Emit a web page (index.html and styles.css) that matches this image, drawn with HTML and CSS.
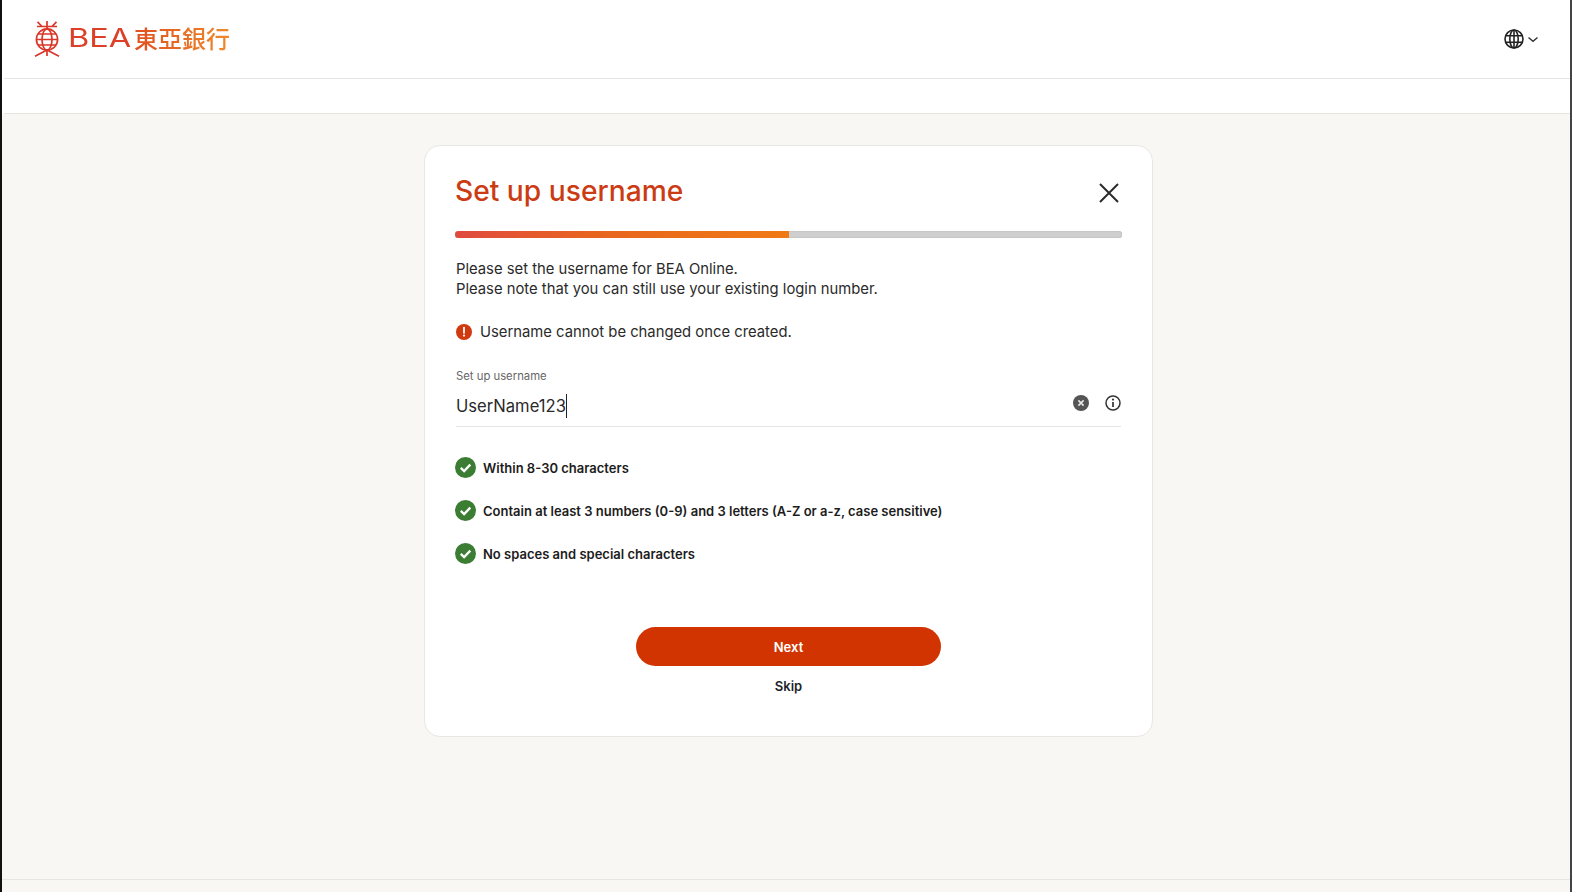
FILE: index.html
```html
<!DOCTYPE html>
<html lang="en">
<head>
<meta charset="utf-8">
<title>Set up username</title>
<link rel="stylesheet" href="styles.css">
</head>
<body>
<div class="frame">
  <header class="topbar">
    <div class="logo">
      <svg class="logo-mark" width="26" height="36" viewBox="0 0 26 36" fill="none" stroke="#d9372a" stroke-width="1.7">
        <circle cx="13" cy="18.5" r="10.6"/>
        <ellipse cx="13" cy="18.5" rx="5" ry="10.6"/>
        <path d="M2.4 18.5h21.2M4.2 13h17.6M4.2 24h17.6M13 0v8M13 29v6"/>
        <path d="M3 5.5h20M3.5 .8l4.5 4.7M22.5 .8L18 5.5M1 35.2l12-6.2 12 6.2"/>
      </svg>
      <span class="logo-text"><span class="logo-en">BEA</span><span class="logo-zh">東亞銀行</span></span>
    </div>
    <div class="lang">
      <svg width="20" height="20" viewBox="0 0 20 20" fill="none" stroke="#222" stroke-width="1.6">
        <circle cx="10" cy="10" r="9"/>
        <ellipse cx="10" cy="10" rx="4.2" ry="9"/>
        <path d="M10 1v18M1.6 6.8h16.8M1.6 13.2h16.8"/>
      </svg>
      <svg width="12" height="7" viewBox="0 0 12 7" fill="none" stroke="#333" stroke-width="1.4"><path d="M1.5 1.5l4.5 3.8 4.5-3.8"/></svg>
    </div>
  </header>
  <div class="subbar"></div>
  <main class="main">
    <section class="card">
      <div class="card-head">
        <h1 class="title">Set up username</h1>
        <svg class="close" width="20" height="20" viewBox="0 0 20 20" fill="none" stroke="#2b2b2b" stroke-width="2"><path d="M1 1l18 18M19 1L1 19"/></svg>
      </div>
      <div class="progress"><div class="progress-fill"></div></div>
      <p class="intro">Please set the username for BEA Online.<br>Please note that you can still use your existing login number.</p>
      <div class="warning">
        <svg width="16" height="16" viewBox="0 0 16 16"><circle cx="8" cy="8" r="8" fill="#d13a0e"/><path d="M8 3.6v5.2" stroke="#fff" stroke-width="1.8" stroke-linecap="round"/><circle cx="8" cy="11.6" r="1.1" fill="#fff"/></svg>
        <span>Username cannot be changed once created.</span>
      </div>
      <div class="field">
        <div class="field-label">Set up username</div>
        <div class="field-row">
          <span class="field-value">UserName123</span>
          <span class="field-icons">
            <svg width="16" height="16" viewBox="0 0 16 16"><circle cx="8" cy="8" r="8" fill="#555"/><path d="M5.4 5.4l5.2 5.2M10.6 5.4l-5.2 5.2" stroke="#e8e8e8" stroke-width="1.6"/></svg>
            <svg width="16" height="16" viewBox="0 0 16 16" fill="none"><circle cx="8" cy="8" r="7" stroke="#333" stroke-width="1.5"/><path d="M8 7v5" stroke="#333" stroke-width="1.7"/><circle cx="8" cy="4.6" r="1.1" fill="#333"/></svg>
          </span>
        </div>
      </div>
      <ul class="rules">
        <li class="rule"><svg class="rule-icon" width="21" height="21" viewBox="0 0 21 21"><circle cx="10.5" cy="10.5" r="10.5" fill="#3c7d34"/><path d="M5.8 10.8l3.3 3.2 6.2-6.4" fill="none" stroke="#fff" stroke-width="2.3"/></svg><span>Within 8-30 characters</span></li>
        <li class="rule"><svg class="rule-icon" width="21" height="21" viewBox="0 0 21 21"><circle cx="10.5" cy="10.5" r="10.5" fill="#3c7d34"/><path d="M5.8 10.8l3.3 3.2 6.2-6.4" fill="none" stroke="#fff" stroke-width="2.3"/></svg><span>Contain at least 3 numbers (0-9) and 3 letters (A-Z or a-z, case sensitive)</span></li>
        <li class="rule"><svg class="rule-icon" width="21" height="21" viewBox="0 0 21 21"><circle cx="10.5" cy="10.5" r="10.5" fill="#3c7d34"/><path d="M5.8 10.8l3.3 3.2 6.2-6.4" fill="none" stroke="#fff" stroke-width="2.3"/></svg><span>No spaces and special characters</span></li>
      </ul>
      <div class="actions">
        <button class="btn-next" type="button">Next</button>
        <button class="btn-skip" type="button">Skip</button>
      </div>
    </section>
  </main>
  <footer class="footer"></footer>
</div>
</body>
</html>
```
FILE: styles.css
```css
* { box-sizing: border-box; }
html, body { margin: 0; padding: 0; height: 892px; overflow: hidden; background: #fff; }
body { font-family: Inter, "Liberation Sans", "Noto Sans CJK TC", sans-serif; color: #222; }
.frame { height: 892px; display: flex; flex-direction: column; border-left: 2px solid #111; border-right: 2px solid #444; }
.topbar { height: 79px; flex: none; display: flex; align-items: center; justify-content: space-between; padding: 0 31px 0 30px; border-bottom: 1px solid #e6e5e1; margin-left: 2px; }
.logo { display: flex; align-items: center; gap: 8px; }
.logo-mark { display: block; }
.logo-text { display: flex; align-items: center; margin-top: -2px; }
.logo-en { display: inline-block; width: 63px; font-size: 25px; font-weight: 400; line-height: 30px; font-family: Inter, sans-serif; color: #dc4028; transform: scaleX(1.3); transform-origin: left; }
.logo-zh { margin-left: 3px; font-size: 24px; font-weight: 500; line-height: 30px; font-family: "Noto Sans CJK TC", sans-serif; background: linear-gradient(90deg, #e0501f 0%, #ee8a2c 100%); -webkit-background-clip: text; background-clip: text; color: transparent; }
.lang { display: flex; align-items: center; gap: 3px; }
.subbar { height: 35px; flex: none; border-bottom: 1px solid #e6e5e1; margin-left: 2px; }
.main { flex: 1; background: #f8f7f3; display: flex; justify-content: center; align-items: flex-start; padding: 31px 0 0 5px; }
.card { width: 729px; height: 592px; background: #fff; border: 1px solid #e8e7e3; border-radius: 16px; padding: 24px 31px 0; }
.card-head { display: flex; align-items: center; justify-content: space-between; height: 42px; padding-right: 2px; }
.title { margin: 0 0 0 -1px; font-size: 28.2px; line-height: 40px; font-weight: 500; color: #cb3c14; }
.close { margin-top: 4px; }
.progress { height: 7px; margin: 19px -1px 0; background: #cfcfcf; border-radius: 4px; overflow: hidden; box-shadow: inset 0 0 1px #888; }
.progress-fill { width: 50%; height: 100%; background: linear-gradient(90deg, #e04a40 0%, #e8641f 40%, #f07a14 100%); }
.intro { margin: 21px 0 0; font-size: 14.8px; line-height: 20px; color: #2a2a2a; }
.warning { display: flex; align-items: center; gap: 8px; margin-top: 23px; font-size: 14.8px; line-height: 20px; color: #2a2a2a; }
.field { margin-top: 26px; border-bottom: 1px solid #e4e4e4; height: 59px; }
.field-label { font-size: 11.3px; line-height: 16px; color: #666; }
.field-row { display: flex; align-items: center; justify-content: space-between; margin-top: 10px; height: 24px; }
.field-value { font-size: 16.6px; line-height: 24px; color: #2a2a2a; border-right: 1px solid #222; }
.field-icons { display: flex; gap: 16px; align-items: center; margin-top: -7px; }
.rules { list-style: none; margin: 30px 0 0; padding: 0; display: flex; flex-direction: column; gap: 22px; }
.rule { display: flex; align-items: center; gap: 7px; height: 21px; font-size: 13px; font-weight: 600; color: #1c1c1c; }
.rule-icon { margin-left: -1px; }
.actions { display: flex; flex-direction: column; align-items: center; margin-top: 63px; }
.btn-next { width: 305px; height: 39px; border: 0; border-radius: 20px; background: #d13400; color: #fff; font: 600 13px Inter, sans-serif; }
.btn-skip { margin-top: 11px; border: 0; padding: 0; background: none; color: #1b1f2a; font: 600 13px/18px Inter, sans-serif; }
.footer { height: 13px; flex: none; background: #f8f7f3; border-top: 1px solid #e6e5e1; }
```
